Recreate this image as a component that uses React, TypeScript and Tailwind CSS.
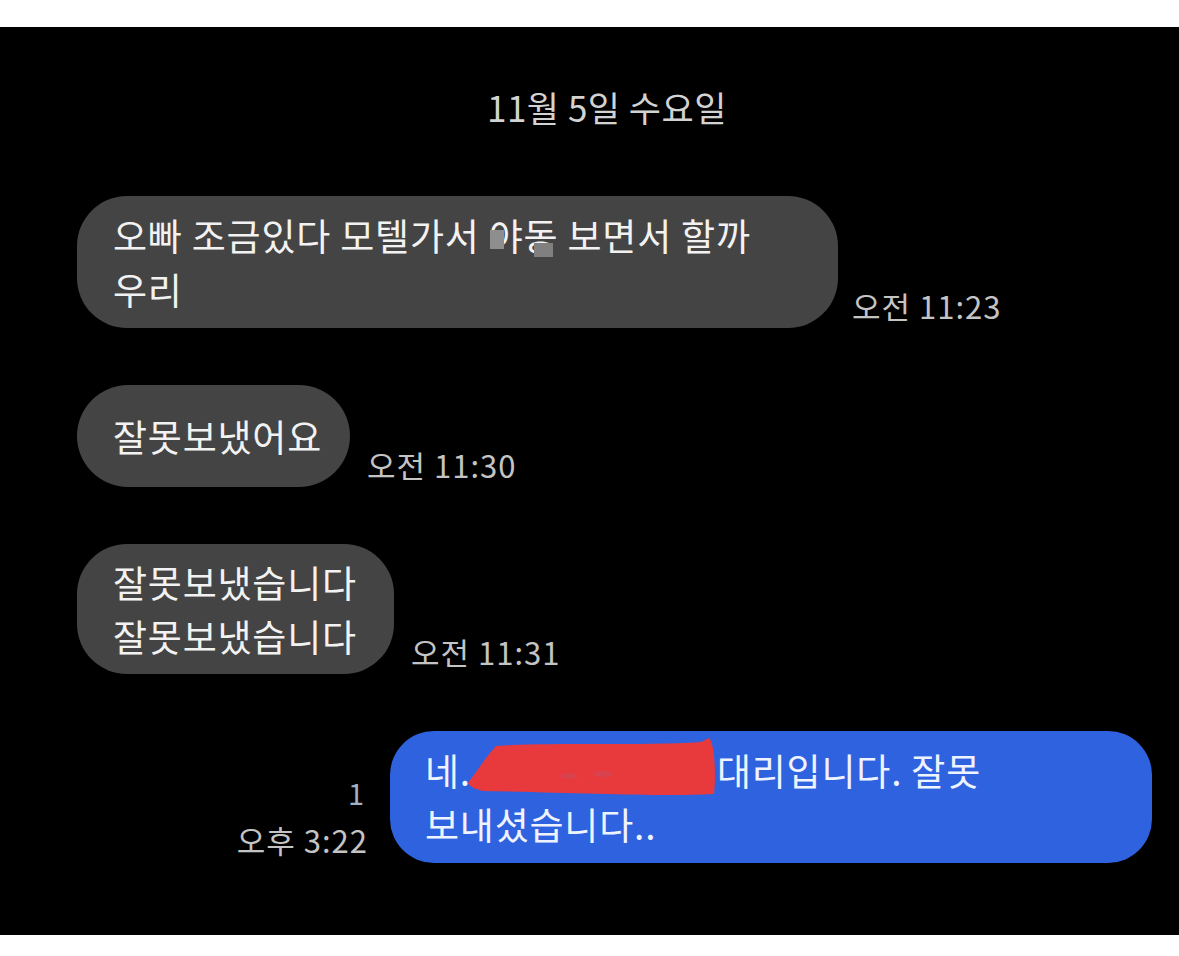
const font = { fontFamily: '"Noto Sans CJK KR", "Noto Sans", sans-serif' };

function Time({ children }: { children: React.ReactNode }) {
    return (
        <span className="mb-[3px] text-[31px] leading-[38px] tracking-[1px] text-[#c4c4c4] whitespace-nowrap">{children}</span>
    );
}

const bubbleText = 'text-[37px] leading-[54px] tracking-[0.8px]';

export default function App() {
    return (
        <div className="min-h-[956px] bg-white pt-[27px]" style={font}>
            <div className="h-[908px] bg-black pl-[77px] pr-[27px] pt-[56px]">
                {/* date header */}
                <div className="flex justify-center pr-[15px] text-[35px] leading-[48px] tracking-[0.5px] text-[#d2d2d2]">
                    11월 5일 수요일
                </div>

                <div className="mt-[65px] flex flex-col gap-[57px]">
                    {/* message 1 */}
                    <div className="flex items-end gap-[14px]">
                        <div className={`w-[761px] rounded-[50px] bg-[#444444] px-[36px] py-[12px] text-[#f2f2f2] ${bubbleText}`}>
                            오빠 조금있다 모텔가서{' '}
                            <span className="relative">
                                야동
                                <span className="absolute left-[1px] top-[22px] h-[19px] w-[14px] bg-[#8e8e8e]" />
                                <span className="absolute left-[45px] top-[35px] h-[14px] w-[19px] bg-[#808080]" />
                            </span>{' '}
                            보면서 할까
                            <br />
                            우리
                        </div>
                        <Time>오전 11:23</Time>
                    </div>

                    {/* message 2 */}
                    <div className="flex items-end gap-[17px]">
                        <div className={`flex h-[102px] w-[273px] items-center whitespace-nowrap rounded-[51px] bg-[#444444] pl-[36px] text-[#f2f2f2] ${bubbleText}`}>
                            잘못보냈어요
                        </div>
                        <Time>오전 11:30</Time>
                    </div>

                    {/* message 3 */}
                    <div className="flex items-end gap-[17px]">
                        <div className={`w-[317px] whitespace-nowrap rounded-[50px] bg-[#444444] pl-[36px] py-[11px] text-[#f2f2f2] ${bubbleText}`}>
                            잘못보냈습니다
                            <br />
                            잘못보냈습니다
                        </div>
                        <Time>오전 11:31</Time>
                    </div>

                    {/* my reply */}
                    <div className="flex items-end justify-end gap-[22px]">
                        <div className="mb-[4px] flex flex-col items-end">
                            <span className="mr-[4px] text-[29px] leading-[34px] text-[#9fb2c6]">1</span>
                            <span className="mt-[12px] text-[31px] leading-[38px] tracking-[1px] text-[#c4c4c4]">오후 3:22</span>
                        </div>
                        <div className={`w-[762px] rounded-[44px] bg-[#2f62df] px-[35px] py-[12px] text-[#eef3ff] ${bubbleText}`}>
                            네.
                            <span className="relative inline-block h-[40px] w-[246px] align-middle">
                                <svg className="absolute left-[-8px] top-[-20px]" width="256" height="64" viewBox="0 0 256 64">
                                    <path
                                        d="M5 47 C 12 38, 22 22, 33 10 C 90 6, 180 10, 238 6 L 246 2 C 252 8, 253 40, 251 58 C 200 61, 120 57, 20 55 C 12 53, 6 50, 5 47 Z"
                                        fill="#e83a3c"
                                    />
                                    <ellipse cx="106" cy="40" rx="9" ry="3" fill="#d8434f" />
                                    <ellipse cx="140" cy="38" rx="10" ry="3" fill="#d8434f" />
                                </svg>
                            </span>
                            대리입니다. 잘못
                            <br />
                            보내셨습니다..
                        </div>
                    </div>
                </div>
            </div>
        </div>
    );
}
